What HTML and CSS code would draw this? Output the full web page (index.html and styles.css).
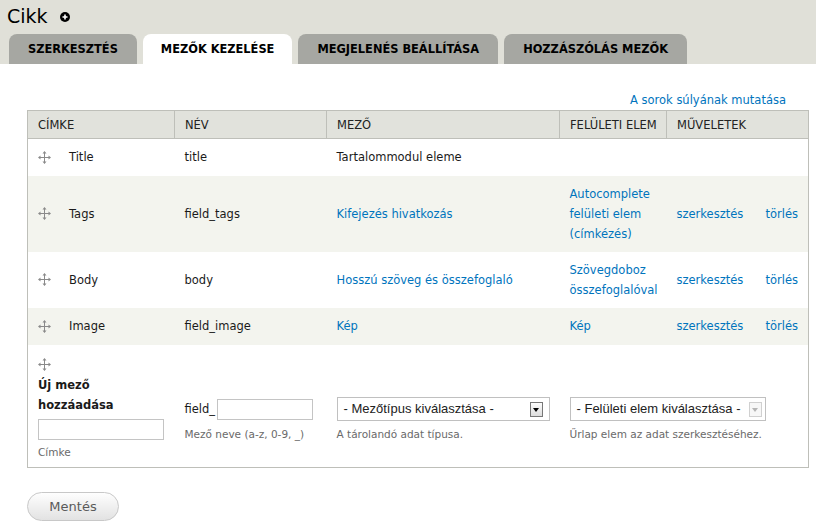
FILE: index.html
```html
<!DOCTYPE html>
<html lang="hu">
<head>
    <meta charset="UTF-8">
    <title>Cikk - Mezők kezelése</title>
    <link rel="stylesheet" href="styles.css">
</head>
<body>
    <header class="page-head">
        <h1 class="page-title">Cikk
            <a class="add-shortcut" href="#">
                <svg width="10" height="10" viewBox="0 0 10 10"><circle cx="5" cy="5" r="5" fill="#000"/><path d="M5 2.5v5M2.5 5h5" stroke="#fff" stroke-width="1.6"/></svg>
            </a>
        </h1>
        <ul class="tabs">
            <li><a href="#">Szerkesztés</a></li>
            <li class="active"><a href="#">Mezők kezelése</a></li>
            <li><a href="#">Megjelenés beállítása</a></li>
            <li><a href="#">Hozzászólás mezők</a></li>
        </ul>
    </header>

    <main class="content">
        <div class="weight-toggle"><a href="#">A sorok súlyának mutatása</a></div>

        <table class="fields">
            <colgroup>
                <col class="c-label">
                <col class="c-name">
                <col class="c-type">
                <col class="c-widget">
                <col class="c-edit">
                <col class="c-delete">
            </colgroup>
            <thead>
                <tr>
                    <th>Címke</th>
                    <th>Név</th>
                    <th>Mező</th>
                    <th>Felületi elem</th>
                    <th colspan="2">Műveletek</th>
                </tr>
            </thead>
            <tbody>
                <tr class="odd">
                    <td><span class="drag"><svg class="handle" width="13" height="13" viewBox="0 0 13 13"><path d="M6.5 2v9M2 6.5h9" stroke="#8a8a8a"/><path d="M6.5 0l-2 2.5h4zM6.5 13l-2-2.5h4zM0 6.5l2.5-2v4zM13 6.5l-2.5-2v4z" fill="#8a8a8a"/></svg>Title</span></td>
                    <td>title</td>
                    <td>Tartalommodul eleme</td>
                    <td></td>
                    <td></td>
                    <td></td>
                </tr>
                <tr class="even">
                    <td><span class="drag"><svg class="handle" width="13" height="13" viewBox="0 0 13 13"><path d="M6.5 2v9M2 6.5h9" stroke="#8a8a8a"/><path d="M6.5 0l-2 2.5h4zM6.5 13l-2-2.5h4zM0 6.5l2.5-2v4zM13 6.5l-2.5-2v4z" fill="#8a8a8a"/></svg>Tags</span></td>
                    <td>field_tags</td>
                    <td><a href="#">Kifejezés hivatkozás</a></td>
                    <td><a href="#">Autocomplete felületi elem (címkézés)</a></td>
                    <td><a href="#">szerkesztés</a></td>
                    <td><a href="#">törlés</a></td>
                </tr>
                <tr class="odd">
                    <td><span class="drag"><svg class="handle" width="13" height="13" viewBox="0 0 13 13"><path d="M6.5 2v9M2 6.5h9" stroke="#8a8a8a"/><path d="M6.5 0l-2 2.5h4zM6.5 13l-2-2.5h4zM0 6.5l2.5-2v4zM13 6.5l-2.5-2v4z" fill="#8a8a8a"/></svg>Body</span></td>
                    <td>body</td>
                    <td><a href="#">Hosszú szöveg és összefoglaló</a></td>
                    <td><a href="#">Szövegdoboz összefoglalóval</a></td>
                    <td><a href="#">szerkesztés</a></td>
                    <td><a href="#">törlés</a></td>
                </tr>
                <tr class="even">
                    <td><span class="drag"><svg class="handle" width="13" height="13" viewBox="0 0 13 13"><path d="M6.5 2v9M2 6.5h9" stroke="#8a8a8a"/><path d="M6.5 0l-2 2.5h4zM6.5 13l-2-2.5h4zM0 6.5l2.5-2v4zM13 6.5l-2.5-2v4z" fill="#8a8a8a"/></svg>Image</span></td>
                    <td>field_image</td>
                    <td><a href="#">Kép</a></td>
                    <td><a href="#">Kép</a></td>
                    <td><a href="#">szerkesztés</a></td>
                    <td><a href="#">törlés</a></td>
                </tr>
                <tr class="odd add-new">
                    <td>
                        <svg class="handle" width="13" height="13" viewBox="0 0 13 13"><path d="M6.5 2v9M2 6.5h9" stroke="#8a8a8a"/><path d="M6.5 0l-2 2.5h4zM6.5 13l-2-2.5h4zM0 6.5l2.5-2v4zM13 6.5l-2.5-2v4z" fill="#8a8a8a"/></svg>
                        <label class="new-label">Új mező hozzáadása</label>
                        <input class="text label-input" type="text">
                        <div class="description">Címke</div>
                    </td>
                    <td>
                        <div class="late">
                            <span class="prefix">field_</span><input class="text name-input" type="text">
                        </div>
                        <div class="description">Mező neve (a-z, 0-9, _)</div>
                    </td>
                    <td>
                        <div class="late">
                            <div class="select type-select"><span>- Mezőtípus kiválasztása -</span><span class="arrow"></span></div>
                        </div>
                        <div class="description">A tárolandó adat típusa.</div>
                    </td>
                    <td colspan="3">
                        <div class="late">
                            <div class="select widget-select disabled"><span>- Felületi elem kiválasztása -</span><span class="arrow"></span></div>
                        </div>
                        <div class="description">Űrlap elem az adat szerkesztéséhez.</div>
                    </td>
                </tr>
            </tbody>
        </table>

        <button class="save">Mentés</button>
    </main>
</body>
</html>
```

FILE: styles.css
```css
body {
    margin: 0;
    font-family: "DejaVu Sans", Verdana, sans-serif;
    font-size: 11.5px;
    color: #1a1a1a;
    background: #fff;
}
a {
    color: #0074bd;
    text-decoration: none;
}

/* head */
.page-head {
    background: #e0e0d8;
    height: 64px;
    padding: 0;
}
.page-title {
    margin: 0;
    padding: 4px 7px 0;
    height: 30px;
    font-size: 19px;
    font-weight: normal;
    line-height: 24px;
    color: #000;
}
.add-shortcut {
    display: inline-block;
    margin-left: 6px;
    vertical-align: 1px;
}
.add-shortcut svg {
    display: block;
}
.tabs {
    list-style: none;
    margin: 0;
    padding: 0 0 0 9px;
    display: flex;
    gap: 6px;
}
.tabs a {
    display: block;
    height: 30px;
    line-height: 31px;
    padding: 0 19px 0 19px;
    background: #a6a7a2;
    border-radius: 8px 8px 0 0;
    color: #000;
    font-size: 11.4px;
    font-weight: bold;
    text-transform: uppercase;
}
.tabs .active a {
    background: #fff;
    padding: 0 18px;
}

/* content */
.content {
    padding: 0 8px 0 27px;
}
.weight-toggle {
    text-align: right;
    padding: 26px 22px 0 0;
    line-height: 20px;
}
.fields {
    width: 781px;
    border-collapse: collapse;
    table-layout: fixed;
    border: 1px solid #bebfb9;
}
.c-label { width: 147px; }
.c-name { width: 152px; }
.c-type { width: 233px; }
.c-widget { width: 107px; }
.c-edit { width: 89px; }
.c-delete { width: 53px; }

.fields th {
    background: #e1e2dc;
    border: 1px solid #bebfb9;
    height: 27px;
    padding: 0 10px;
    text-align: left;
    font-weight: normal;
    text-transform: uppercase;
    white-space: nowrap;
    color: #222;
}
.fields td {
    padding: 8px 10px;
    line-height: 20px;
    vertical-align: middle;
}
.fields tbody tr {
    height: 37px;
}
.fields tr.odd { background: #fff; }
.fields tr.even { background: #f3f4ee; }

.drag {
    display: flex;
    align-items: center;
    gap: 18px;
}
.handle {
    display: block;
    flex: none;
}

/* add new row */
.add-new td {
    vertical-align: top;
    padding-top: 13px;
    padding-bottom: 6px;
}
.add-new .new-label {
    display: block;
    margin-top: 4px;
    width: 110px;
    font-weight: bold;
    font-size: 11.5px;
    line-height: 20px;
}
.text {
    box-sizing: border-box;
    height: 21px;
    border: 1px solid #c4c4c4;
    background: #fff;
    padding: 0 3px;
    margin: 0;
    font: inherit;
}
.label-input {
    display: block;
    width: 126px;
    margin-top: 4px;
}
.name-input {
    width: 96px;
    vertical-align: middle;
    margin-left: 2px;
}
.prefix {
    vertical-align: middle;
}
.late {
    margin-top: 40px;
    height: 23px;
    display: flex;
    align-items: center;
}
.description {
    font-size: 10.5px;
    color: #6a6a6a;
    line-height: 18px;
    margin-top: 4px;
}
.add-new td:first-child .description {
    margin-top: 3px;
}

.select {
    box-sizing: border-box;
    height: 24px;
    border: 1px solid #c0c0c0;
    background: #fff;
    display: flex;
    align-items: center;
    justify-content: space-between;
    padding: 0 6px 0 6px;
    font-family: "Liberation Sans", Arial, sans-serif;
    font-size: 13px;
    color: #222;
}
.type-select { width: 213px; }
.widget-select { width: 196px; padding-right: 3px; }
.select .arrow {
    box-sizing: border-box;
    width: 13px;
    height: 15px;
    border: 1px solid #777;
    background: linear-gradient(#fdfdfd, #dcdcdc);
    position: relative;
}
.select .arrow::after {
    content: "";
    position: absolute;
    left: 2px;
    top: 5px;
    border-left: 3.5px solid transparent;
    border-right: 3.5px solid transparent;
    border-top: 4px solid #000;
}
.select.disabled .arrow {
    border-color: #d0d0d0;
    background: #f7f7f7;
}
.select.disabled .arrow::after {
    border-top-color: #b5b5b5;
}

.save {
    margin-top: 24px;
    width: 92px;
    height: 29px;
    border: 1px solid #c8c8c8;
    border-radius: 15px;
    background: linear-gradient(#fefefe, #e2e2e2);
    color: #5a5a5a;
    font-family: "DejaVu Sans", Verdana, sans-serif;
    font-size: 13px;
    padding: 0;
}
```
